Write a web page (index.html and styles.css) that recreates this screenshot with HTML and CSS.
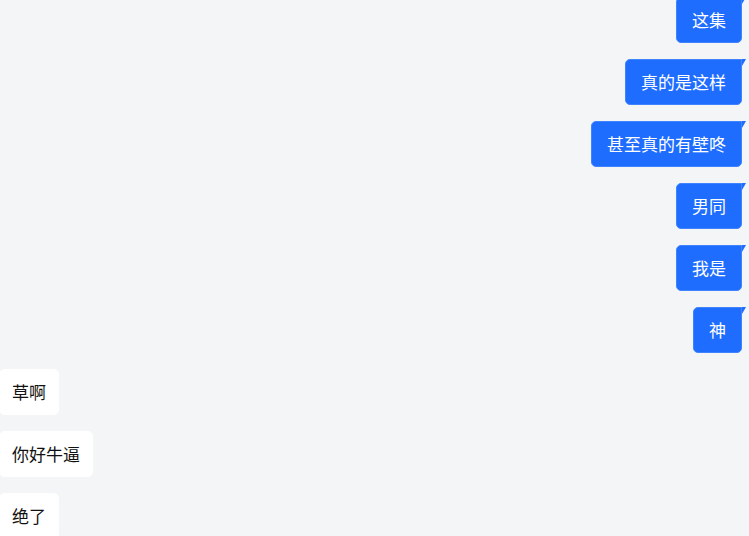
FILE: index.html
```html
<!DOCTYPE html>
<html lang="zh-CN">
<head>
    <meta charset="UTF-8">
    <meta name="viewport" content="width=device-width, initial-scale=1.0">
    <title>聊天</title>
    <link rel="stylesheet" href="styles.css">
</head>
<body>
    <div class="chat">
        <div class="row mine"><div class="bubble">这集</div></div>
        <div class="row mine"><div class="bubble">真的是这样</div></div>
        <div class="row mine"><div class="bubble">甚至真的有壁咚</div></div>
        <div class="row mine"><div class="bubble">男同</div></div>
        <div class="row mine"><div class="bubble">我是</div></div>
        <div class="row mine"><div class="bubble">神</div></div>
        <div class="row other"><div class="bubble">草啊</div></div>
        <div class="row other"><div class="bubble">你好牛逼</div></div>
        <div class="row other"><div class="bubble">绝了</div></div>
    </div>
</body>
</html>
```

FILE: styles.css
```css
body {
    margin: 0;
    padding: 0;
    background: #f4f5f7;
    font-family: "Noto Sans CJK SC", "Liberation Sans", sans-serif;
    overflow: hidden;
}

.chat {
    display: flex;
    flex-direction: column;
    gap: 16px;
    margin-top: -3px;
    padding-right: 7px;
}

.row {
    display: flex;
}

.row.mine {
    justify-content: flex-end;
}

.row.other {
    justify-content: flex-start;
    margin-left: -1px;
}

.bubble {
    position: relative;
    font-size: 17px;
    line-height: 22px;
    padding: 11px 15px;
    border-radius: 5px;
}

.mine .bubble {
    background: #1f6dff;
    border: 1px solid #3f83ff;
    border-top-right-radius: 0;
    color: #ffffff;
}

.mine .bubble::after {
    content: "";
    position: absolute;
    top: -1px;
    right: -5px;
    width: 0;
    height: 0;
    border-top: 7px solid #1f6dff;
    border-right: 4px solid transparent;
}

.other .bubble {
    background: #ffffff;
    border: 1px solid #ffffff;
    padding: 11px 12px;
    color: #111111;
}
```
